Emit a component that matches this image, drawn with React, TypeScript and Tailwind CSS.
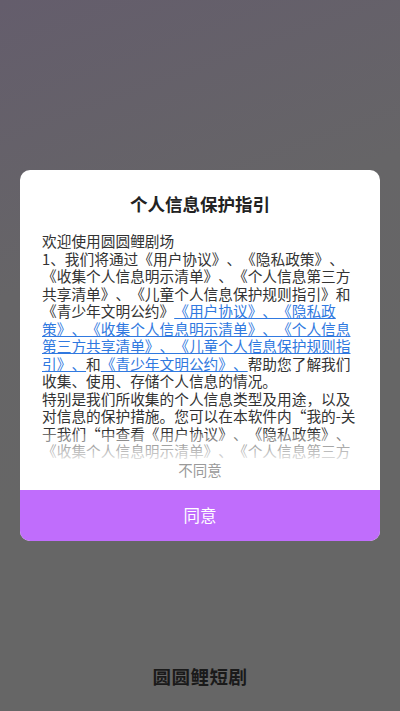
import React from 'react';

const font = { fontFamily: '"Noto Sans CJK SC", "Noto Sans", sans-serif' };

function Link({ children }: { children: React.ReactNode }) {
  return <span className="text-[#3079e0] underline underline-offset-1">{children}</span>;
}

export default function App() {
  return (
    <div
      lang="zh-CN"
      className="h-[711px] w-[400px] overflow-hidden flex flex-col items-center bg-[linear-gradient(160deg,#645d6c_0%,#666567_35%,#666666_60%)] [text-spacing-trim:space-all]"
      style={font}
    >
      {/* 隐私弹窗 */}
      <div className="mt-[170px] w-[360px] rounded-[10px] bg-white overflow-hidden flex flex-col">
        <div className="pt-[22px] text-center text-[17.5px] leading-[24px] font-bold text-[#222]">
          个人信息保护指引
        </div>

        <div className="relative mt-[16px] h-[228px] overflow-hidden px-[22px]">
          <div className="text-[14.7px] leading-[17.5px] text-[#333]">
            <p>欢迎使用圆圆鲤剧场</p>
            <p>
              1、我们将通过《用户协议》、《隐私政策》、《收集个人信息明示清单》、《个人信息第三方共享清单》、《儿童个人信息保护规则指引》和《青少年文明公约》
              <Link>《用户协议》、《隐私政策》、《收集个人信息明示清单》、《个人信息第三方共享清单》、《儿童个人信息保护规则指引》、</Link>
              和<Link>《青少年文明公约》、</Link>帮助您了解我们收集、使用、存储个人信息的情况。
            </p>
            <p>
              特别是我们所收集的个人信息类型及用途，以及对信息的保护措施。您可以在本软件内“我的-关于我们“中查看《用户协议》、《隐私政策》、《收集个人信息明示清单》、《个人信息第三方共享清单》、《儿童个人信息保护规则指引》。
            </p>
          </div>
          <div className="absolute inset-x-0 bottom-0 h-[26px] bg-[linear-gradient(to_bottom,rgba(255,255,255,0.3),rgba(255,255,255,0.85))]" />
        </div>

        <div className="text-center text-[14.5px] leading-[20px] text-[#9a9a9a]">不同意</div>

        <button className="mt-[10px] h-[51px] w-full bg-[#c06dfc] text-white text-[16.5px]">
          同意
        </button>
      </div>

      <div className="mt-[122px] text-[18.5px] leading-[26px] font-bold text-[#1a1a1a] tracking-[0.5px]">
        圆圆鲤短剧
      </div>
    </div>
  );
}
